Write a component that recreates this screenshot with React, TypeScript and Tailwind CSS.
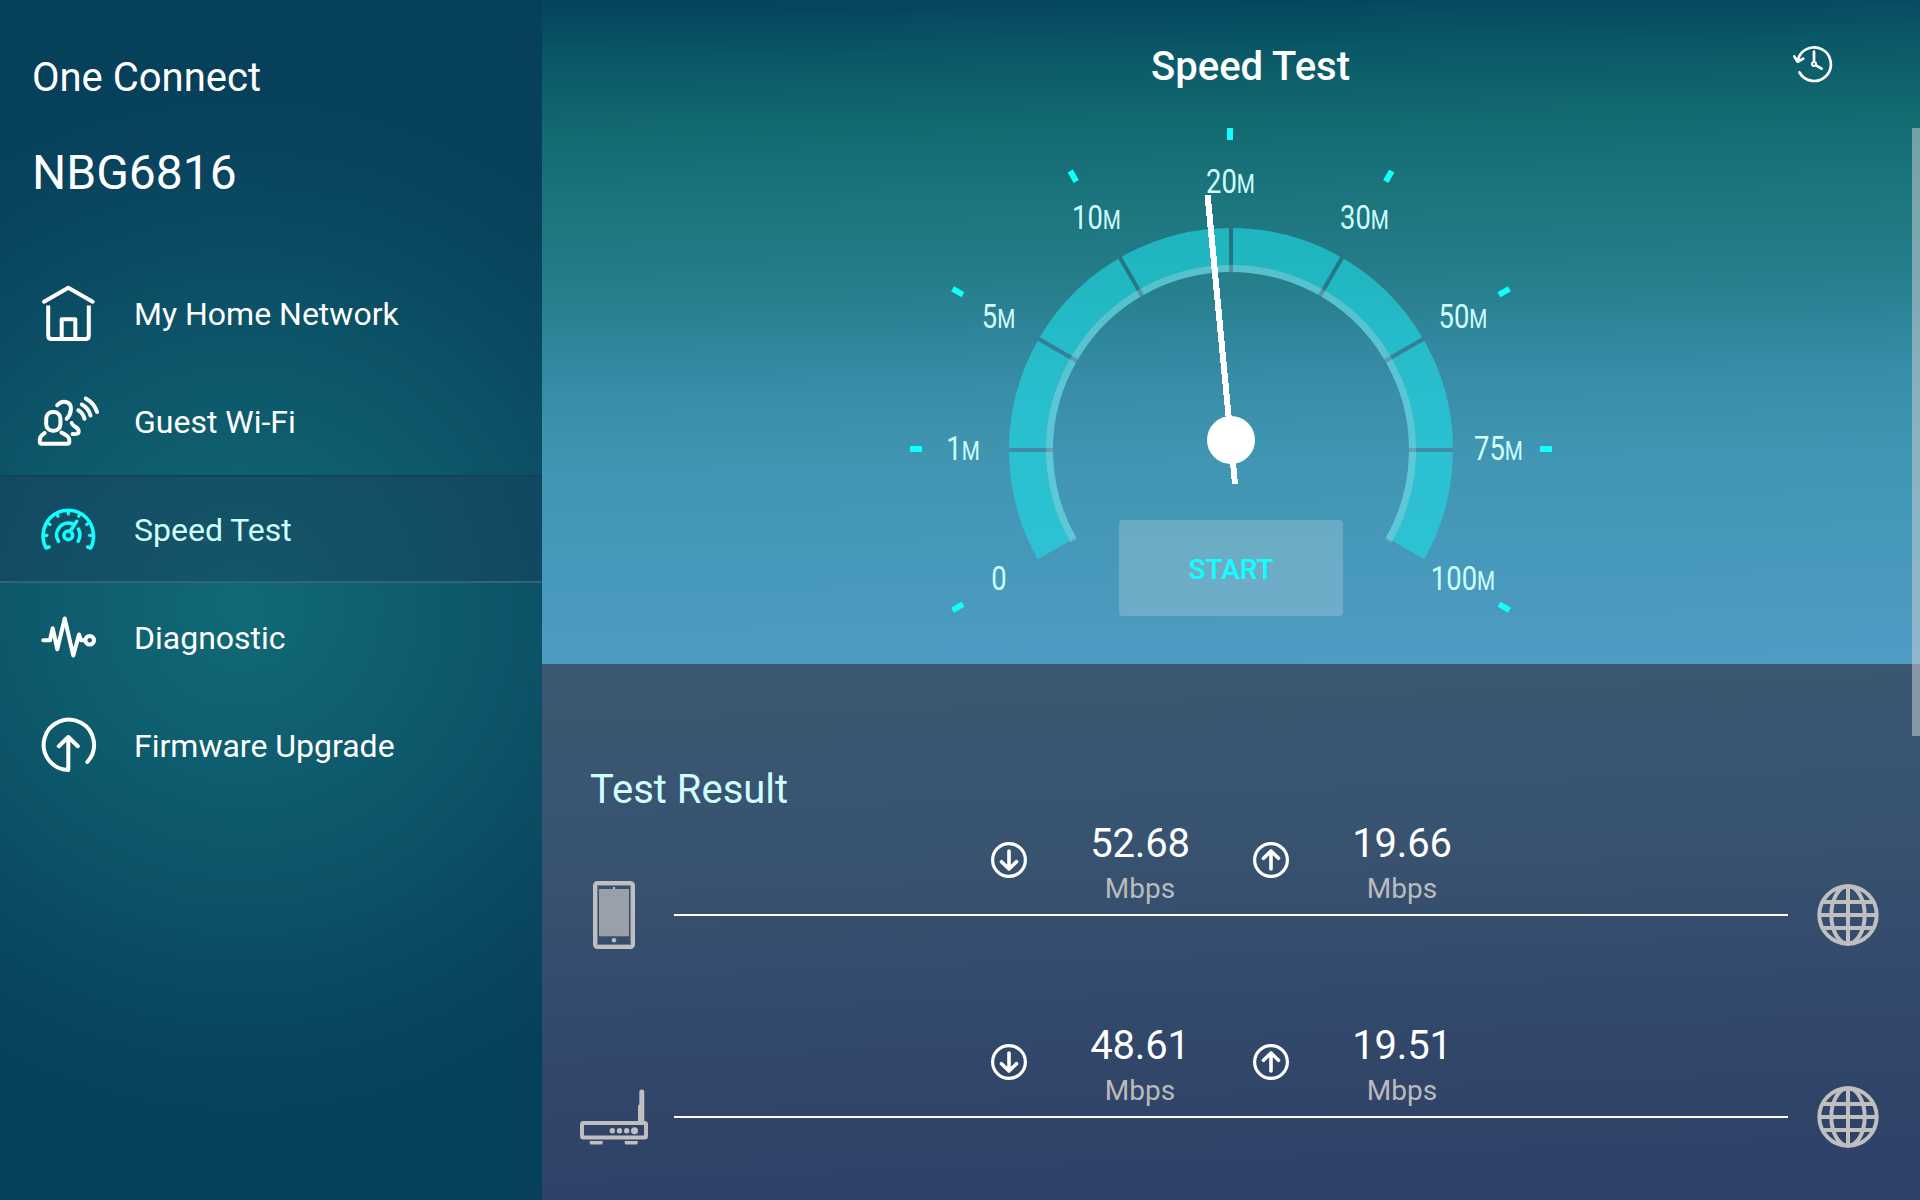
import type { ReactNode } from "react";

const strokeProps = {
  fill: "none",
  stroke: "currentColor",
  strokeWidth: 4,
  strokeLinecap: "round",
  strokeLinejoin: "round",
} as const;

function MenuIcon({ children }: { children: ReactNode }) {
  return (
    <svg viewBox="0 0 56 56" className="size-14 shrink-0 overflow-visible" {...strokeProps}>
      {children}
    </svg>
  );
}

const menu = [
  {
    label: "My Home Network",
    icon: (
      <MenuIcon>
        <path d="M4 15.7 28.3 1.7 52.7 15.7" />
        <path d="M8.2 19.500V49.500q0 3.500 3.500 3.500H45.300q3.500 0 3.500-3.500V19.500" strokeLinecap="butt" />
        <path d="M21.700 52V33.300H35.300V52" />
      </MenuIcon>
    ),
  },
  {
    label: "Guest Wi-Fi",
    icon: (
      <MenuIcon>
        <rect x="6.200" y="18" width="14.200" height="18.700" rx="6.500" />
        <path d="M4.700 39C1.500 41-.2 42.500-.2 45.500v2.200q0 2 2 2H27.300q2 0 2-2v-2.200C29.300 42.500 25.500 40.500 21.500 38.600" />
        <path d="M17.200 11.300C19.500 8.600 23 7.300 26 8c4 1 5.300 4 4.900 7.500C30.600 19.500 29.500 22 26.700 24.800" />
        <path d="M31.700 29C32.500 31.500 34 32 36 33.200c2.600 1.600 3 2.800 2.600 5.200-.3 1.500-1.500 1.900-6 1.700" />
        <path d="M38.300 16.300Q43 19 44.500 24.700M41.800 10.500Q48.500 14 50.500 21.500M45.800 4.500Q54.500 9.500 57 18" />
      </MenuIcon>
    ),
  },
  {
    label: "Speed Test",
    active: true,
    icon: (
      <MenuIcon>
        <path d="M9 45 6 46C1 36.500 2.500 24 10.300 15.800A25.200 25.200 0 0 1 46.300 15.800C54 24 55.700 36.500 50.700 46l-3-1" strokeWidth="3.600" />
        <path
          d="M28.300 9v3M17 12.500l1 1.700M39.700 12.500l-1 1.700M8.500 21.500l1.500.9M48.200 21.500l-1.500.9M5 33.300H7M51.700 33.300H49.600"
          strokeWidth="3.200"
        />
        <path d="M18.500 39.200A11.700 11.700 0 0 1 32.300 21.800M38.500 27.200Q41.500 33 38.200 39.200M30.300 29 36.700 19.300" strokeWidth="3.600" />
        <circle cx="28.300" cy="33.300" r="4.300" strokeWidth="3.600" />
      </MenuIcon>
    ),
  },
  {
    label: "Diagnostic",
    icon: (
      <MenuIcon>
        <path d="M3.200 30.300H10L12.700 18.300 17.300 39.300 24.700 8.500 33.300 45.500 39 24.500 41 30.300H44" />
        <circle cx="49.700" cy="30.300" r="4.300" />
      </MenuIcon>
    ),
  },
  {
    label: "Firmware Upgrade",
    icon: (
      <MenuIcon>
        <path d="M47.300 44A25.200 25.200 0 1 0 28.300 52V19M18.800 28.200 28.300 19 37.800 28.200" />
      </MenuIcon>
    ),
  },
];

function HistoryIcon() {
  return (
    <svg viewBox="-22 -20 44 40" className="h-10 w-11 overflow-visible" {...strokeProps} strokeWidth="2.700">
      <path d="M-14.500 8.500A16.800 16.800 0 1 0-16.300-3.500" />
      <path d="M-19.700-7.500-16.300-2.300-10.700-5.400" />
      <circle r="2" strokeWidth="2" />
      <path d="M0-12.500V-3M2 1.300 7.500 4.700" />
    </svg>
  );
}

function PhoneIcon() {
  return (
    <svg viewBox="0 0 42 68" className="h-17 w-[42px]" fill="#bfbfbf">
      <rect x="2" y="2" width="38" height="64" rx="2.500" fill="none" stroke="#bfbfbf" strokeWidth="4" />
      <path d="M4.500 4.500h33v59h-33z" fill="none" stroke="#bfbfbf" strokeOpacity=".4" />
      <rect x="6" y="8" width="30" height="47.300" opacity=".72" />
      <rect x="20" y="6" width="2" height="2" />
      <circle cx="21" cy="59.300" r="2.200" />
    </svg>
  );
}

function RouterIcon() {
  return (
    <svg viewBox="0 0 68 56" className="h-14 w-17" fill="#bfbfbf">
      <rect x="2" y="34" width="64" height="14.500" rx="1.500" fill="none" stroke="#bfbfbf" strokeWidth="4" />
      <path d="M58 33V16.500l1.300-1V3q0-2.500 2.500-2.500T64.300 3V33z" />
      <circle cx="32.300" cy="41.700" r="2.700" />
      <circle cx="39.500" cy="41.700" r="2.700" />
      <circle cx="46.700" cy="41.700" r="2.700" />
      <circle cx="54.500" cy="41.700" r="3.500" />
      <path d="M9.700 52h13v2q0 1.500-1.500 1.500h-10q-1.500 0-1.500-1.500zM44.700 52h13v2q0 1.500-1.500 1.500h-10q-1.500 0-1.500-1.500z" />
    </svg>
  );
}

function GlobeIcon() {
  return (
    <svg viewBox="0 0 62 62" className="size-[62px]" fill="none" stroke="#bfbfbf" strokeWidth="4">
      <circle cx="31" cy="31" r="28.700" />
      <ellipse cx="31" cy="31" rx="16.700" ry="28.700" />
      <path d="M31 2v58M6 18h50M2 31h58M6 44h50" />
    </svg>
  );
}

function ArrowIcon({ up }: { up?: boolean }) {
  return (
    <svg viewBox="-18 -18 36 36" className="mb-[9px] size-9" {...strokeProps} strokeWidth="3.600">
      <circle r="16.400" strokeWidth="3.200" />
      <path d={up ? "M0 9V-9M-7.500-1.700 0-9 7.500-1.700" : "M0-9V9M-7.500 1.700 0 9 7.500 1.700"} />
    </svg>
  );
}

const CX = 231;
const CY = 450;

const dividers = [-90, -60, -30, 0, 30, 60, 90];
const stops = [-120, ...dividers, 120];

// x is the middle of the label, y its baseline
const labels = [
  { value: "0", x: -1, y: 590 },
  { value: "1", unit: "M", x: -37, y: 460 },
  { value: "5", unit: "M", x: -1.500, y: 327.500 },
  { value: "10", unit: "M", x: 96.500, y: 229 },
  { value: "20", unit: "M", x: 230.500, y: 193 },
  { value: "30", unit: "M", x: 364.500, y: 229 },
  { value: "50", unit: "M", x: 463, y: 327.500 },
  { value: "75", unit: "M", x: 498.500, y: 460 },
  { value: "100", unit: "M", x: 463, y: 590 },
];

function arc(r: number) {
  const dx = r * Math.cos(Math.PI / 6);
  const dy = r / 2;
  return `M${CX - dx} ${CY + dy}A${r} ${r} 0 1 1 ${CX + dx} ${CY + dy}`;
}

function Gauge() {
  return (
    <svg viewBox="-109 112 680 520" className="col-start-1 row-start-1 h-[520px] w-[680px]">
      <mask id="segments" maskUnits="userSpaceOnUse" x="0" y="200" width="462" height="400">
        <rect x="0" y="200" width="462" height="400" fill="#fff" />
        {stops.map((a) => (
          <rect key={a} x={CX - 2} y={CY - 226} width="4" height="52" fill="#000" transform={`rotate(${a} ${CX} ${CY})`} />
        ))}
      </mask>
      <path d={arc(200)} fill="none" stroke="#1fdbe3" strokeOpacity=".62" strokeWidth="44" mask="url(#segments)" />
      <path d={arc(181.500)} fill="none" stroke="#c8d8e0" strokeOpacity=".32" strokeWidth="7" />
      {dividers.map((a) => (
        <rect
          key={a}
          x={CX - 2}
          y={CY - 221.500}
          width="4"
          height="43.500"
          fill="#40405f"
          fillOpacity=".1"
          transform={`rotate(${a} ${CX} ${CY})`}
        />
      ))}
      {stops.map((a) => (
        <rect
          key={a}
          x={a === 0 ? 227 : 228}
          y="128"
          width="6"
          height="12"
          fill="#12ffff"
          transform={`rotate(${a} ${CX} ${Math.abs(a) === 90 ? 449 : 449.5})`}
        />
      ))}
      {labels.map((l) => (
        <text
          key={l.value}
          transform={`translate(${l.x} ${l.y}) scale(.83 1)`}
          textAnchor="middle"
          fill="#cfffff"
          fontSize="33"
        >
          {l.value}
          {l.unit && <tspan fontSize="25">{l.unit}</tspan>}
        </text>
      ))}
      <path d="M204.500 195H210.700L238 484H232z" fill="#fff" shapeRendering="crispEdges" />
      <circle cx="231" cy="440" r="24" fill="#fff" />
    </svg>
  );
}

const results = [
  { device: <PhoneIcon />, down: "52.68", up: "19.66" },
  { device: <RouterIcon />, down: "48.61", up: "19.51" },
];

function Speed({ value, up }: { value: string; up?: boolean }) {
  return (
    <div className="flex w-[262px] items-center">
      <ArrowIcon up={up} />
      <div className="ml-[38px] flex w-[150px] flex-col items-center">
        <span className="text-[40px] leading-[47px] tracking-[-0.2px]">{value}</span>
        <span className="mt-[3px] text-[28px] leading-[38px] text-[#bbbbbb]">Mbps</span>
      </div>
    </div>
  );
}

export default function App() {
  return (
    <div className="flex h-[1200px] w-[1920px] overflow-hidden font-['Roboto',sans-serif] text-white">
      <aside className="w-[542px] shrink-0 bg-[radial-gradient(circle_at_242px_606px,#116a76_0px,#0d576b_240px,#09465f_420px,#07405a_520px)]">
        <h2 className="px-8 pt-[54px] text-[40px] leading-[48px]">One Connect</h2>
        <h1 className="px-8 pt-[43px] text-[48px] leading-[56px]">NBG6816</h1>
        <nav className="mt-[58px]">
          {menu.map((item) => (
            <div
              key={item.label}
              className={
                item.active
                  ? "flex h-27 items-center gap-[38px] border-y-2 border-t-[#134456] border-b-[#2f6676] bg-[#1a3d5a]/45 px-10 pt-0.5 text-[#12ffff]"
                  : "flex h-27 items-center gap-[38px] px-10 pt-0.5"
              }
            >
              {item.icon}
              <span className={item.active ? "text-[32px] text-[#cfffff]" : "text-[32px]"}>{item.label}</span>
            </div>
          ))}
        </nav>
      </aside>

      <main className="relative flex flex-1 flex-col">
        <section className="h-[664px] shrink-0 bg-[linear-gradient(179deg,#05455f_10px,#095767_60px,#12686f_125px,#1b737b_200px,#277e8d_300px,#388da8_395px,#4196b3_480px,#4799bb_580px,#4e9bc3_670px)]">
          <header className="flex h-28 items-center pt-[22px]">
            <div className="w-[259px]" />
            <h1 className="flex-1 text-center text-[40px] font-medium">Speed Test</h1>
            <div className="mr-[84px] flex w-[136px] justify-end pb-1.5">
              <HistoryIcon />
            </div>
          </header>
          <div className="grid justify-center">
            <Gauge />
            <button className="z-10 col-start-1 row-start-1 mt-[408px] h-24 w-56 justify-self-center rounded bg-[#b2d1de]/35 pt-1 text-[28px] font-medium text-[#12ffff]">
              START
            </button>
          </div>
        </section>

        <section className="flex-1 bg-[linear-gradient(178deg,#3b5771_10px,#385370_200px,#344b6d_330px,#314669_430px,#2f4169_540px)]">
          <h2 className="px-12 pt-[103px] pb-px text-[40px] leading-[46px] text-[#cfffff]">Test Result</h2>
          {results.map((r) => (
            <div key={r.down} className="flex h-[202px] items-center">
              <div className="flex w-[132px] justify-center pl-[12px]">{r.device}</div>
              <div className="relative h-0.5 w-[1114px] bg-white">
                <div className="absolute bottom-2 left-[317px] flex">
                  <Speed value={r.down} />
                  <Speed value={r.up} up />
                </div>
              </div>
              <div className="ml-[29px]">
                <GlobeIcon />
              </div>
            </div>
          ))}
        </section>
        <div className="absolute top-32 right-0 h-[608px] w-2 bg-[#c4cccf]/55" />
      </main>
    </div>
  );
}
